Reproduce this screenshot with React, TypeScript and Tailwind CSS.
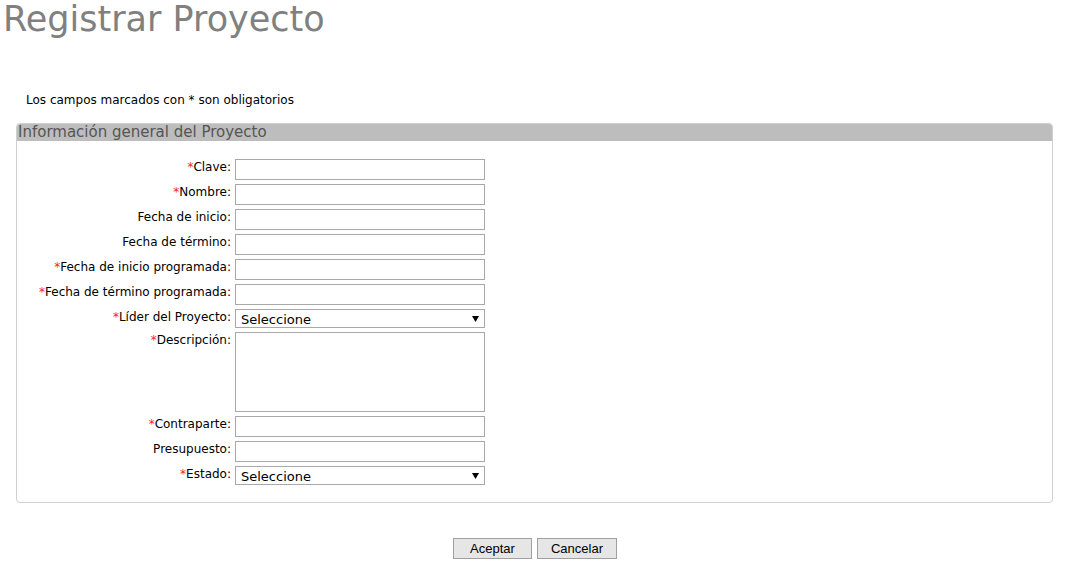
const fields: { label: string; required: boolean; kind: 'input' | 'select' | 'textarea' }[] = [
  { label: 'Clave:', required: true, kind: 'input' },
  { label: 'Nombre:', required: true, kind: 'input' },
  { label: 'Fecha de inicio:', required: false, kind: 'input' },
  { label: 'Fecha de término:', required: false, kind: 'input' },
  { label: 'Fecha de inicio programada:', required: true, kind: 'input' },
  { label: 'Fecha de término programada:', required: true, kind: 'input' },
  { label: 'Líder del Proyecto:', required: true, kind: 'select' },
  { label: 'Descripción:', required: true, kind: 'textarea' },
  { label: 'Contraparte:', required: true, kind: 'input' },
  { label: 'Presupuesto:', required: false, kind: 'input' },
  { label: 'Estado:', required: true, kind: 'select' },
];

function Field({ kind }: { kind: 'input' | 'select' | 'textarea' }) {
  if (kind === 'textarea') {
    return <textarea className="block w-[250px] h-[80px] border border-[#a9a9a9] resize-none bg-white" />;
  }
  if (kind === 'select') {
    return (
      <div className="relative w-[250px] h-[19px]">
        <select className="block appearance-none w-full h-full border border-[#a9a9a9] bg-white pl-[5px] pt-[1px] text-[13px] leading-[17px] text-black">
          <option>Seleccione</option>
        </select>
        <svg className="absolute right-[6px] top-[6px]" width="7" height="8" viewBox="0 0 7 8">
          <path d="M0 1 L7 1 L3.5 7 Z" fill="#000" />
        </svg>
      </div>
    );
  }
  return <input type="text" className="block w-[250px] h-[21px] border border-[#a9a9a9] bg-white" />;
}

export default function App() {
  return (
    <div className="bg-white min-h-[566px] font-['DejaVu_Sans',Verdana,sans-serif]">
      <h1 className="text-[35px] leading-[38px] text-[#808080] pl-[3px]">Registrar Proyecto</h1>

      <p className="mt-[54px] ml-[26px] text-[12px] leading-[16px] text-black">Los campos marcados con * son obligatorios</p>

      <div className="mx-[16px] mt-[15px] w-[1037px] border border-[#d0d0d0] rounded-[4px] overflow-hidden">
        <div className="bg-[#bdbdbd] h-[17px] pl-[1px] text-[15px] leading-[17px] text-[#555555]">
          Información general del Proyecto
        </div>
        <div className="pt-[18px] pb-[17px] flex flex-col gap-[4px]">
          {fields.map((f) => (
            <div key={f.label} className="flex items-start">
              <div className="w-[218px] pr-[4px] text-right text-[12px] leading-[16px] text-black whitespace-nowrap">
                {f.required && <span className="text-[#ff2020]">*</span>}
                {f.label}
              </div>
              <Field kind={f.kind} />
            </div>
          ))}
        </div>
      </div>

      <div className="flex justify-center gap-[5px] mt-[35px] pr-[3px] font-['Liberation_Sans',Arial,sans-serif]">
        <button className="w-[79px] h-[21px] border border-[#a0a0a0] bg-[#e6e6e6] text-[13px] text-black">Aceptar</button>
        <button className="w-[80px] h-[21px] border border-[#a0a0a0] bg-[#e6e6e6] text-[13px] text-black">Cancelar</button>
      </div>
    </div>
  );
}
